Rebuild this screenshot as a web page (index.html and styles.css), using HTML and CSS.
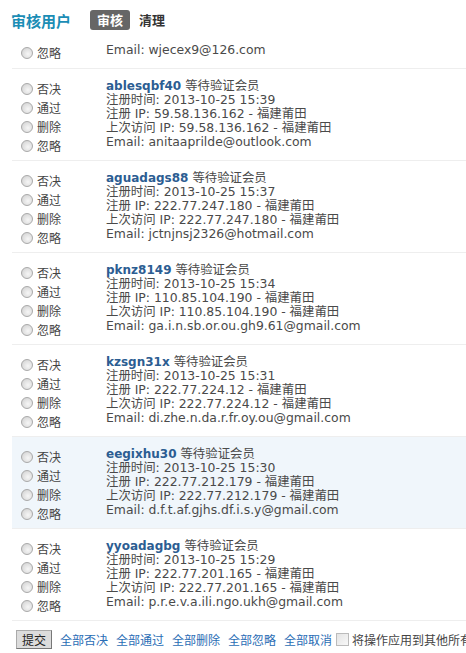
FILE: index.html
```html
<!DOCTYPE html>
<html lang="zh-CN">
<head>
<meta charset="utf-8">
<title>审核用户</title>
<link rel="stylesheet" href="styles.css">
</head>
<body>
<div class="page">
  <div class="header">
    <span class="title">审核用户</span>
    <span class="tab active">审核</span>
    <span class="tab">清理</span>
  </div>

  <div class="row partial">
    <div class="opts">
      <label class="opt"><span class="radio"></span>忽略</label>
    </div>
    <div class="info">
      <div class="line">Email: wjecex9@126.com</div>
    </div>
  </div>

  <div class="row">
    <div class="opts">
      <label class="opt"><span class="radio"></span>否决</label>
      <label class="opt"><span class="radio"></span>通过</label>
      <label class="opt"><span class="radio"></span>删除</label>
      <label class="opt"><span class="radio"></span>忽略</label>
    </div>
    <div class="info">
      <div class="line"><a class="name">ablesqbf40</a> 等待验证会员</div>
      <div class="line">注册时间: 2013-10-25 15:39</div>
      <div class="line">注册 IP: 59.58.136.162 - 福建莆田</div>
      <div class="line">上次访问 IP: 59.58.136.162 - 福建莆田</div>
      <div class="line">Email: anitaaprilde@outlook.com</div>
    </div>
  </div>

  <div class="row">
    <div class="opts">
      <label class="opt"><span class="radio"></span>否决</label>
      <label class="opt"><span class="radio"></span>通过</label>
      <label class="opt"><span class="radio"></span>删除</label>
      <label class="opt"><span class="radio"></span>忽略</label>
    </div>
    <div class="info">
      <div class="line"><a class="name">aguadags88</a> 等待验证会员</div>
      <div class="line">注册时间: 2013-10-25 15:37</div>
      <div class="line">注册 IP: 222.77.247.180 - 福建莆田</div>
      <div class="line">上次访问 IP: 222.77.247.180 - 福建莆田</div>
      <div class="line">Email: jctnjnsj2326@hotmail.com</div>
    </div>
  </div>

  <div class="row">
    <div class="opts">
      <label class="opt"><span class="radio"></span>否决</label>
      <label class="opt"><span class="radio"></span>通过</label>
      <label class="opt"><span class="radio"></span>删除</label>
      <label class="opt"><span class="radio"></span>忽略</label>
    </div>
    <div class="info">
      <div class="line"><a class="name">pknz8149</a> 等待验证会员</div>
      <div class="line">注册时间: 2013-10-25 15:34</div>
      <div class="line">注册 IP: 110.85.104.190 - 福建莆田</div>
      <div class="line">上次访问 IP: 110.85.104.190 - 福建莆田</div>
      <div class="line">Email: ga.i.n.sb.or.ou.gh9.61@gmail.com</div>
    </div>
  </div>

  <div class="row">
    <div class="opts">
      <label class="opt"><span class="radio"></span>否决</label>
      <label class="opt"><span class="radio"></span>通过</label>
      <label class="opt"><span class="radio"></span>删除</label>
      <label class="opt"><span class="radio"></span>忽略</label>
    </div>
    <div class="info">
      <div class="line"><a class="name">kzsgn31x</a> 等待验证会员</div>
      <div class="line">注册时间: 2013-10-25 15:31</div>
      <div class="line">注册 IP: 222.77.224.12 - 福建莆田</div>
      <div class="line">上次访问 IP: 222.77.224.12 - 福建莆田</div>
      <div class="line">Email: di.zhe.n.da.r.fr.oy.ou@gmail.com</div>
    </div>
  </div>

  <div class="row hover">
    <div class="opts">
      <label class="opt"><span class="radio"></span>否决</label>
      <label class="opt"><span class="radio"></span>通过</label>
      <label class="opt"><span class="radio"></span>删除</label>
      <label class="opt"><span class="radio"></span>忽略</label>
    </div>
    <div class="info">
      <div class="line"><a class="name">eegixhu30</a> 等待验证会员</div>
      <div class="line">注册时间: 2013-10-25 15:30</div>
      <div class="line">注册 IP: 222.77.212.179 - 福建莆田</div>
      <div class="line">上次访问 IP: 222.77.212.179 - 福建莆田</div>
      <div class="line">Email: d.f.t.af.gjhs.df.i.s.y@gmail.com</div>
    </div>
  </div>

  <div class="row">
    <div class="opts">
      <label class="opt"><span class="radio"></span>否决</label>
      <label class="opt"><span class="radio"></span>通过</label>
      <label class="opt"><span class="radio"></span>删除</label>
      <label class="opt"><span class="radio"></span>忽略</label>
    </div>
    <div class="info">
      <div class="line"><a class="name">yyoadagbg</a> 等待验证会员</div>
      <div class="line">注册时间: 2013-10-25 15:29</div>
      <div class="line">注册 IP: 222.77.201.165 - 福建莆田</div>
      <div class="line">上次访问 IP: 222.77.201.165 - 福建莆田</div>
      <div class="line">Email: p.r.e.v.a.ili.ngo.ukh@gmail.com</div>
    </div>
  </div>

  <div class="footer">
    <button class="submit" type="button">提交</button>
    <a class="act">全部否决</a>
    <a class="act">全部通过</a>
    <a class="act">全部删除</a>
    <a class="act">全部忽略</a>
    <a class="act">全部取消</a>
    <span class="check"></span>
    <span class="note">将操作应用到其他所有页面</span>
  </div>
</div>
</body>
</html>
```

FILE: styles.css
```css
html, body {
  margin: 0;
  padding: 0;
  background: #fff;
  overflow: hidden;
}

body {
  font-family: "DejaVu Sans", Verdana, "Noto Sans CJK SC", sans-serif;
  font-size: 12.4px;
  color: #4a4a4a;
}

.page {
  padding-left: 12px;
  width: 560px;
}

.header {
  display: flex;
  align-items: center;
  height: 40px;
  margin-left: -1px;
  font-family: "Noto Sans CJK SC", sans-serif;
  white-space: nowrap;
}

.title {
  font-size: 15px;
  font-weight: bold;
  color: #1b8db5;
  margin-right: 19px;
}

.tab {
  font-size: 13px;
  font-weight: bold;
  color: #333;
  padding: 0 7px;
  line-height: 20px;
  border-radius: 3px;
  margin-right: 2px;
}

.tab.active {
  background: #666;
  color: #fff;
}

.row {
  display: flex;
  border-top: 1px solid #eeeeee;
  padding: 10px 0 5px;
}

.row.partial {
  border-top: none;
  padding: 3px 0 6px;
}

.row.hover {
  background: #f0f6fb;
}

.opts {
  width: 94px;
  flex: none;
  display: flex;
  flex-direction: column;
}

.opt {
  display: flex;
  align-items: center;
  height: 19px;
  padding-left: 9px;
  font-family: "Noto Sans CJK SC", sans-serif;
  font-size: 12px;
  color: #444;
}

.radio {
  width: 10px;
  height: 10px;
  border: 1px solid #a9a9a9;
  border-radius: 50%;
  background: radial-gradient(circle at 60% 60%, #f6f6f6 0%, #dedede 60%, #c8c8c8 100%);
  margin-right: 4px;
  flex: none;
}

.info {
  flex: 1;
  white-space: nowrap;
}

.line {
  line-height: 14px;
  height: 14px;
}

.name {
  font-size: 12px;
  font-weight: bold;
  color: #2c5d92;
  text-decoration: none;
}

.footer {
  display: flex;
  align-items: center;
  border-top: 1px solid #eeeeee;
  padding: 9px 0 0 4px;
  white-space: nowrap;
  font-family: "Noto Sans CJK SC", sans-serif;
  font-size: 12px;
}

.submit {
  font-family: "Noto Sans CJK SC", sans-serif;
  font-size: 12px;
  color: #222;
  background: #dcdcdc;
  border: 1px solid #aaa;
  border-right-color: #777;
  border-bottom-color: #777;
  padding: 0 5px;
  height: 19px;
  line-height: 16px;
  margin-right: 8px;
}

.act {
  color: #2a6db5;
  text-decoration: none;
  margin-right: 8px;
}

.act:last-of-type {
  margin-right: 4px;
}

.check {
  width: 11px;
  height: 11px;
  border: 1px solid #bbb;
  background: linear-gradient(135deg, #e4e4e4, #f8f8f8);
  margin-right: 3px;
  flex: none;
}

.note {
  color: #444;
}
```
